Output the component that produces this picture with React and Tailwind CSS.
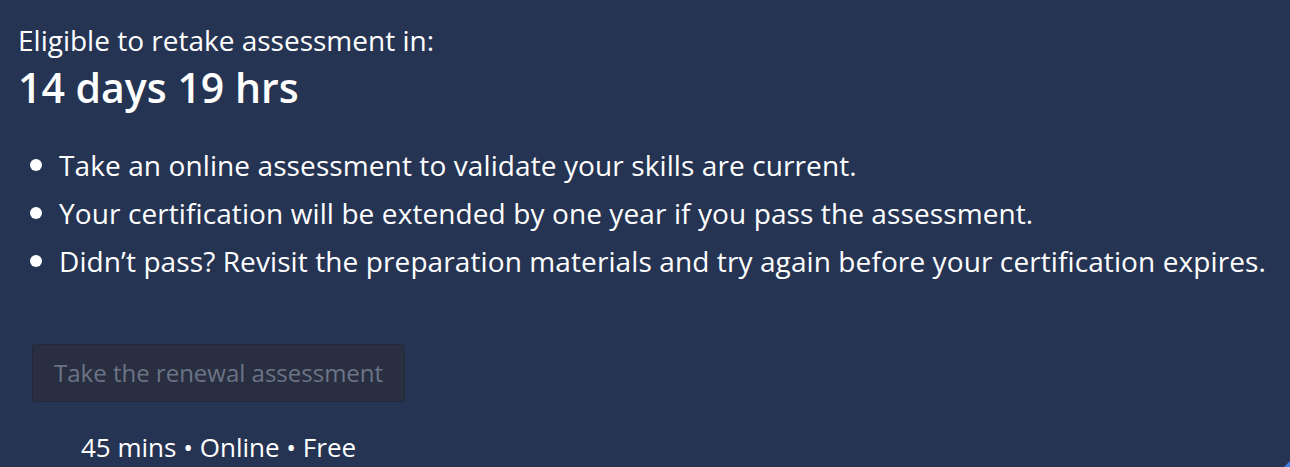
import React from "react"

const bullets = [
  "Take an online assessment to validate your skills are current.",
  "Your certification will be extended by one year if you pass the assessment.",
  "Didn\u2019t pass? Revisit the preparation materials and try again before your certification expires.",
]

export default function App() {
  return (
    <div
      className="relative h-[467px] w-[1290px] overflow-hidden bg-[#263453] text-white"
      style={{ fontFamily: '"Open Sans", "Noto Sans", sans-serif' }}
    >
      <div className="pl-[18px] pt-[23px]">
        <p className="text-[28px] leading-[34px]">Eligible to retake assessment in:</p>
        <p className="mt-[6px] text-[41px] font-semibold leading-[48px]">14 days 19 hrs</p>

        <ul className="mt-[30px] flex flex-col">
          {bullets.map((b) => (
            <li key={b} className="flex h-[48px] items-center text-[28px] tracking-[0.1px]">
              <span className="ml-[12px] mr-[17px] h-[12px] w-[12px] shrink-0 rounded-full bg-white" />
              {b}
            </li>
          ))}
        </ul>

        <div className="ml-[14px] mt-[59px] inline-flex flex-col items-center">
          <button
            disabled
            className="h-[58px] rounded-[3px] border border-[#22293a] bg-[#292f40] px-[21px] text-[24px] text-[#6b7487]"
          >
            Take the renewal assessment
          </button>
          <p className="mt-[28px] text-[26px] leading-[34px]">45 mins &bull; Online &bull; Free</p>
        </div>
      </div>

      <div className="absolute bottom-0 right-0 h-0 w-0 border-b-[6px] border-l-[6px] border-b-[#3b7fe0] border-l-transparent" />
    </div>
  )
}
